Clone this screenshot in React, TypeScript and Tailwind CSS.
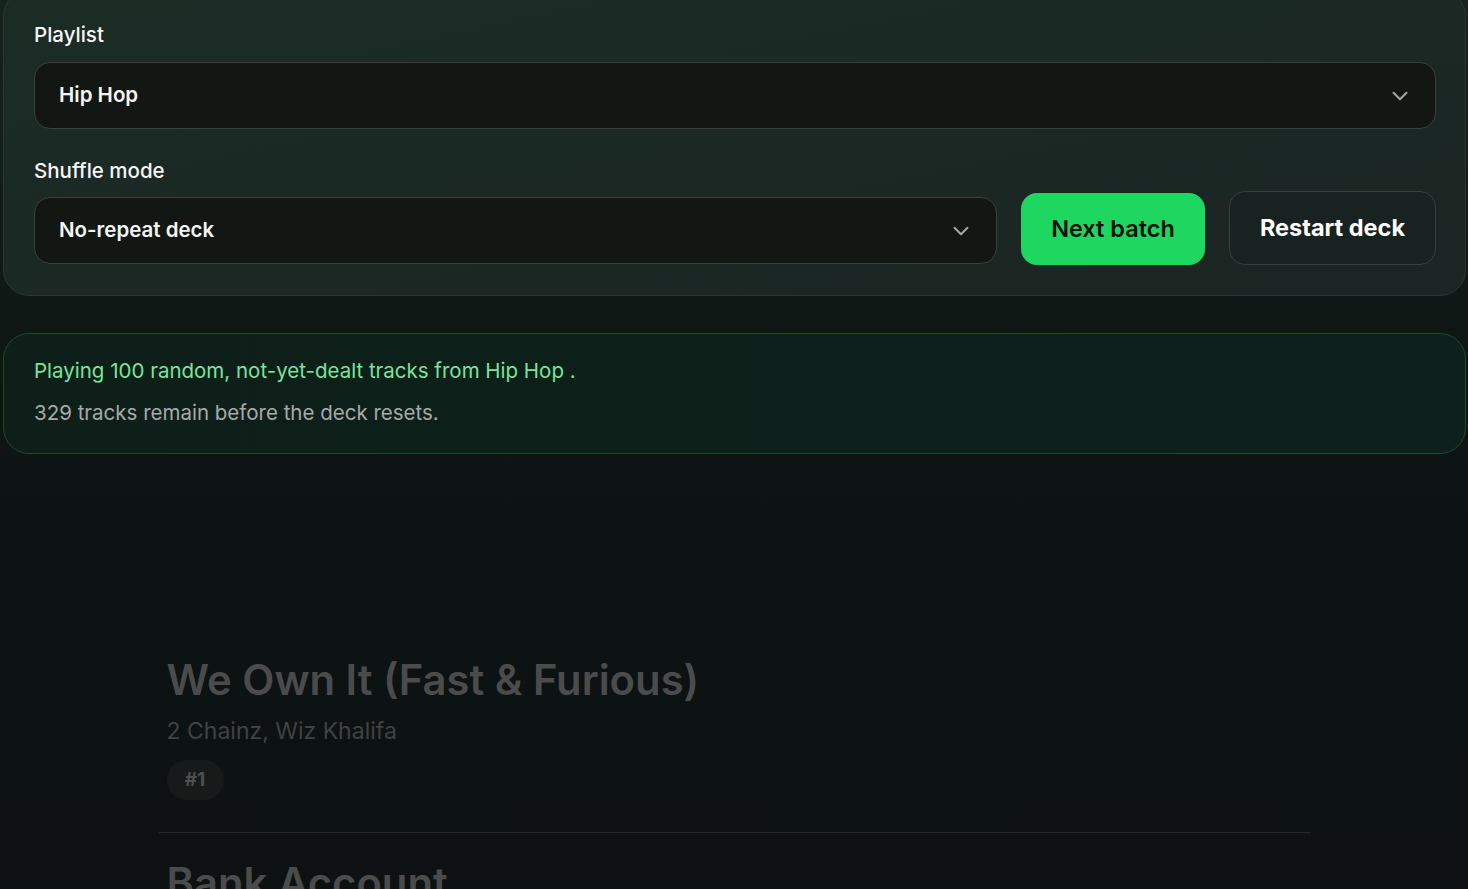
import { ChevronDown } from "lucide-react";

const tracks = [
  { title: "We Own It (Fast & Furious)", artists: "2 Chainz, Wiz Khalifa", rank: 1 },
  { title: "Bank Account", artists: "21 Savage", rank: 2 },
];

function SelectBox({ value }: { value: string }) {
  return (
    <div className="flex h-[67px] w-full items-center justify-between rounded-2xl border border-[#3a403d] bg-[#121714] pl-6 pr-[22px]">
      <span className="text-[20.5px] font-semibold text-[#f3f4f3]">{value}</span>
      <ChevronDown size={26} strokeWidth={1.8} className="text-[#a3a7a5]" />
    </div>
  );
}

export default function App() {
  return (
    <div
      className="min-h-screen overflow-hidden bg-[#0d1111] pl-[3px] pr-[2px] text-white"
      style={{
        fontFamily: "Inter, 'Noto Sans', sans-serif",
        backgroundImage:
          "linear-gradient(180deg, #15241e 0px, #0e1714 330px, #0d1212 560px, #0d1111 100%)",
      }}
    >
      {/* controls card */}
      <section className="-mt-[10px] rounded-[26px] border border-[#2c3532] bg-gradient-to-br from-[#1b2c25] to-[#1b2523] pb-[30px] pl-[30px] pr-[29px] pt-[30px]">
        <label className="block text-[20.5px] font-medium leading-7 text-[#f5f6f5]">Playlist</label>
        <div className="mt-[13px]">
          <SelectBox value="Hip Hop" />
        </div>

        <label className="mt-[28px] block text-[20.5px] font-medium leading-7 text-[#f5f6f5]">
          Shuffle mode
        </label>
        <div className="mt-[6px] flex items-end gap-6">
          <div className="mb-[1px] flex-1">
            <SelectBox value="No-repeat deck" />
          </div>
          <button className="h-[72px] w-[184px] rounded-2xl bg-[#1ed760] text-[23.5px] font-semibold text-[#0a0f0c]">
            Next batch
          </button>
          <button className="h-[74px] w-[207px] rounded-2xl border border-[#37403d] bg-[#182220] text-[23.5px] font-bold text-white">
            Restart deck
          </button>
        </div>
      </section>

      {/* info banner */}
      <section className="mt-[37px] rounded-[26px] border border-[#1c4a2b] bg-gradient-to-r from-[#0e1f19] to-[#0d201b] px-[30px] pb-[26px] pt-[23px]">
        <p className="text-[20.5px] leading-7 text-[#7be39c]">
          Playing 100 random, not-yet-dealt tracks from Hip Hop .
        </p>
        <p className="mt-[14px] text-[20.5px] leading-7 text-[#a6aaa8]">
          329 tracks remain before the deck resets.
        </p>
      </section>

      {/* track list */}
      <ul className="mx-auto mt-[200px] max-w-[1152px]">
        {tracks.map((t) => (
          <li key={t.rank} className="border-b border-[#242828] px-2 pb-[32px] pt-0 last:border-b-0 [&+li]:pt-[24px]">
            <h2 className="text-[41.8px] font-semibold leading-[52px] text-[#4a4c4b]">{t.title}</h2>
            <p className="mt-[10px] text-[23px] leading-[30px] text-[#3f4342]">{t.artists}</p>
            <span className="mt-[14px] inline-flex h-10 w-[57px] items-center justify-center rounded-full bg-[#161a19] text-[19px] font-bold text-[#4d504f]">
              #{t.rank}
            </span>
          </li>
        ))}
      </ul>
    </div>
  );
}
